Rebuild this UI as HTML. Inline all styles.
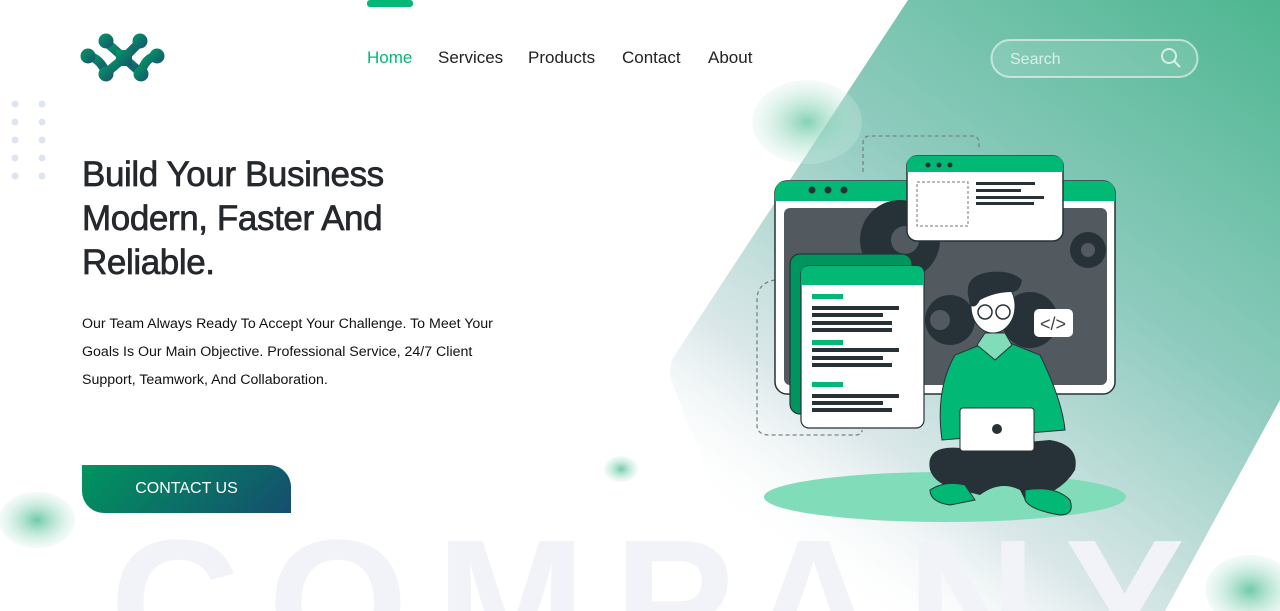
<!DOCTYPE html>
<html><head><meta charset="utf-8">
<style>
*{margin:0;padding:0;box-sizing:border-box}
html,body{width:1280px;height:611px;overflow:hidden}
body{background:#fff;font-family:"Liberation Sans",sans-serif;position:relative}
.abs{position:absolute}
.nav a{position:absolute;top:48px;font-size:17px;color:#222;text-decoration:none}
h1{position:absolute;left:82px;top:153px;font-size:35px;line-height:44px;font-weight:normal;color:#25282c;letter-spacing:-0.4px;-webkit-text-stroke:0.7px #25282c}
p.sub{position:absolute;left:82px;top:310px;font-size:14.2px;line-height:28px;color:#111;width:440px}
.btn{position:absolute;left:82px;top:465px;width:209px;height:48px;border-radius:0 22px 0 22px;background:linear-gradient(135deg,#00955f,#154d6e);color:#fff;font-size:16px;text-align:center;line-height:48px}
</style></head><body>
<svg class="abs" style="left:0;top:0" width="1280" height="611">
<defs>
<linearGradient id="bg" x1="1" y1="0" x2="0.3" y2="1">
<stop offset="0" stop-color="#4db690"/><stop offset="0.45" stop-color="#8ecbbe"/><stop offset="0.8" stop-color="#dce8ea"/><stop offset="1" stop-color="#fff" stop-opacity="0"/></linearGradient>
<radialGradient id="bl"><stop offset="0" stop-color="#6fcaa8"/><stop offset="1" stop-color="#d6f0e6" stop-opacity="0.3"/></radialGradient>
<linearGradient id="logo" x1="0" y1="0" x2="1" y2="1"><stop offset="0" stop-color="#009b63"/><stop offset="1" stop-color="#19506f"/></linearGradient>
</defs>
<path d="M908 0 L1280 0 L1280 400 L1165 611 L760 611 L675 390 Q665 370 675 355 Z" fill="url(#bg)"/>
<text x="110" y="665" font-family="Liberation Sans" font-weight="bold" font-size="180" fill="#f1f3f8" letter-spacing="28">COMPANY</text>
<ellipse cx="807" cy="122" rx="55" ry="42" fill="url(#bl)" opacity="0.85"/>
<ellipse cx="37" cy="520" rx="38" ry="28" fill="url(#bl)"/>
<ellipse cx="621" cy="469" rx="17" ry="13" fill="url(#bl)"/>
<ellipse cx="1250" cy="590" rx="45" ry="35" fill="url(#bl)"/>
<g fill="#dde5f3">
<circle cx="15" cy="104" r="3.5"/><circle cx="42" cy="104" r="3.5"/>
<circle cx="15" cy="122" r="3.5"/><circle cx="42" cy="122" r="3.5"/>
<circle cx="15" cy="140" r="3.5"/><circle cx="42" cy="140" r="3.5"/>
<circle cx="15" cy="158" r="3.5"/><circle cx="42" cy="158" r="3.5"/>
<circle cx="15" cy="176" r="3.5"/><circle cx="42" cy="176" r="3.5"/>
</g>
<g stroke="url(#logo)" stroke-width="9" stroke-linecap="round" fill="none">
<path d="M106 42 L124 58 L140 42"/>
<path d="M106 73 L124 58 L141 73"/>
<path d="M88 56 Q100 58 106 73"/>
<path d="M156 56 Q145 58 141 73"/>
</g>
<rect x="116" y="50" width="16" height="16" fill="url(#logo)"/>
<g fill="url(#logo)"><circle cx="106" cy="41" r="7.5"/><circle cx="140" cy="41" r="7.5"/><circle cx="88" cy="56" r="7.5"/><circle cx="157" cy="56" r="7.5"/><circle cx="106" cy="74" r="7.5"/><circle cx="141" cy="74" r="7.5"/></g>
<rect x="367" y="0" width="46" height="7" rx="3" fill="#02b875"/>
<rect x="991.5" y="40" width="206" height="37" rx="18.5" fill="rgba(255,255,255,0.12)" stroke="rgba(255,255,255,0.55)" stroke-width="2"/>
<text x="1010" y="64" font-family="Liberation Sans" font-size="16" fill="rgba(255,255,255,0.7)">Search</text>
<circle cx="1169" cy="56" r="7" fill="none" stroke="rgba(255,255,255,0.7)" stroke-width="2"/>
<path d="M1174 61 L1180 67" stroke="rgba(255,255,255,0.7)" stroke-width="2.2"/>
<ellipse cx="945" cy="497" rx="181" ry="25" fill="#80dcb9"/>
<g stroke="#7a8387" stroke-width="1.3" stroke-dasharray="4 3" fill="none">
<path d="M863 172 L863 143 Q863 136 870 136 L972 136 Q979 136 979 143 L979 150"/>
<path d="M775 280 Q757 283 757 300 L757 425 Q757 435 770 435 L855 435 Q862 435 862 430"/>
</g>
<rect x="775" y="181" width="340" height="213" rx="12" fill="#fff" stroke="#263238" stroke-width="1.5"/>
<path d="M775 201 L775 193 Q775 181 787 181 L1103 181 Q1115 181 1115 193 L1115 201 Z" fill="#02b875"/>
<circle cx="812" cy="190" r="3.5" fill="#263238"/><circle cx="828" cy="190" r="3.5" fill="#263238"/><circle cx="844" cy="190" r="3.5" fill="#263238"/>
<rect x="784" y="208" width="323" height="177" rx="6" fill="#525a60"/>
<g fill="#263238">
<circle cx="900" cy="240" r="40"/><circle cx="1088" cy="250" r="18"/><circle cx="950" cy="320" r="25"/><circle cx="1030" cy="320" r="28"/>
</g>
<g fill="#525a60"><circle cx="905" cy="240" r="14"/><circle cx="1088" cy="250" r="7"/><circle cx="940" cy="320" r="10"/></g>
<rect x="907" y="156" width="156" height="85" rx="10" fill="#fff" stroke="#263238" stroke-width="1.5"/>
<path d="M907 172 L907 165 Q907 156 917 156 L1053 156 Q1063 156 1063 165 L1063 172 Z" fill="#02b875"/>
<circle cx="928" cy="165" r="2.5" fill="#263238"/><circle cx="939" cy="165" r="2.5" fill="#263238"/><circle cx="950" cy="165" r="2.5" fill="#263238"/>
<rect x="917" y="182" width="51" height="44" fill="none" stroke="#777" stroke-dasharray="3 2"/>
<g fill="#263238"><rect x="976" y="182" width="59" height="3"/><rect x="976" y="189" width="45" height="3"/><rect x="976" y="196" width="68" height="3"/><rect x="976" y="202" width="58" height="3"/></g>
<rect x="790" y="254" width="122" height="160" rx="10" fill="#00955f" stroke="#263238" stroke-width="1.2"/>
<rect x="801" y="266" width="123" height="162" rx="8" fill="#fff" stroke="#263238" stroke-width="1.2"/>
<path d="M801 285 L801 274 Q801 266 809 266 L916 266 Q924 266 924 274 L924 285 Z" fill="#02b875"/>
<g fill="#02b875"><rect x="812" y="294" width="31" height="5"/><rect x="812" y="340" width="31" height="5"/><rect x="812" y="382" width="31" height="5"/></g>
<g fill="#263238"><rect x="812" y="306" width="87" height="4"/><rect x="812" y="313" width="71" height="4"/><rect x="812" y="321" width="80" height="4"/><rect x="812" y="328" width="80" height="4"/><rect x="812" y="348" width="87" height="4"/><rect x="812" y="356" width="71" height="4"/><rect x="812" y="363" width="80" height="4"/><rect x="812" y="394" width="87" height="4"/><rect x="812" y="401" width="71" height="4"/><rect x="812" y="408" width="80" height="4"/></g>
<rect x="1034" y="309" width="39" height="28" rx="5" fill="#fff"/>
<text x="1053" y="330" text-anchor="middle" font-family="Liberation Sans" font-size="18" fill="#444">&lt;/&gt;</text>
<path d="M942 440 Q935 390 955 355 L985 343 L1010 343 L1040 355 Q1062 400 1065 430 Z" fill="#02b875" stroke="#263238"/>
<path d="M977 345 L995 360 L1012 345 L1005 333 L985 333 Z" fill="#80dcb9" stroke="#263238"/>
<ellipse cx="993" cy="306" rx="22" ry="27" fill="#fff" stroke="#263238"/>
<path d="M968 295 Q965 275 990 272 Q1012 270 1022 280 Q1020 292 1012 292 Q995 292 980 300 Q975 310 970 305 Z" fill="#263238"/>
<circle cx="985" cy="312" r="7" fill="none" stroke="#263238" stroke-width="1.5"/><circle cx="1003" cy="312" r="7" fill="none" stroke="#263238" stroke-width="1.5"/>
<path d="M930 470 Q925 445 960 448 L1050 440 Q1080 445 1075 470 Q1060 495 1025 500 L1020 490 Q1000 480 980 495 L960 490 Q935 485 930 470 Z" fill="#263238"/>
<path d="M930 490 Q945 480 965 485 L975 500 L950 505 Q930 502 930 490 Z" fill="#02b875" stroke="#263238"/>
<path d="M1025 490 Q1055 485 1070 500 Q1075 515 1060 515 Q1030 510 1025 500 Z" fill="#02b875" stroke="#263238"/>
<rect x="960" y="408" width="74" height="43" rx="3" fill="#fff" stroke="#263238"/>
<circle cx="997" cy="429" r="5" fill="#263238"/>
</svg>
<div class="nav">
<a style="left:367px;color:#02b875">Home</a><a style="left:438px">Services</a><a style="left:528px">Products</a><a style="left:622px">Contact</a><a style="left:708px">About</a>
</div>
<h1>Build Your Business<br>Modern, Faster And<br>Reliable.</h1>
<p class="sub">Our Team Always Ready To Accept Your Challenge. To Meet Your Goals Is Our Main Objective. Professional Service, 24/7 Client Support, Teamwork, And Collaboration.</p>
<div class="btn">CONTACT US</div>
</body></html>
